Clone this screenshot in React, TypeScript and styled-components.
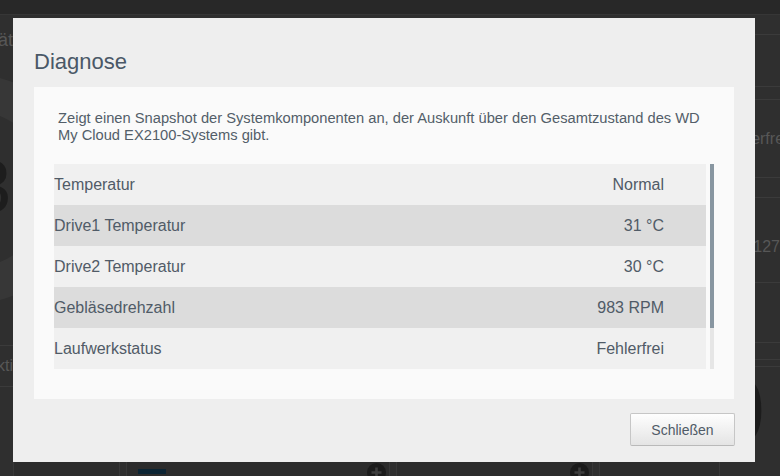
import React from 'react';
import styled, { createGlobalStyle } from 'styled-components';

const GlobalStyle = createGlobalStyle`
  html, body {
    margin: 0;
    padding: 0;
    background: #2f2f2f;
  }
  body {
    font-family: "Liberation Sans", Arial, sans-serif;
  }
  #root {
    width: 780px;
    height: 476px;
    overflow: hidden;
  }
`;

/* ---------- dimmed dashboard behind the dialog ---------- */

const Backdrop = styled.div`
  display: grid;
  grid-template-rows: 15px 1fr;
  width: 780px;
  height: 476px;
  background: #2f2f2f;
  overflow: hidden;
`;

const TopBar = styled.div`
  background: #282828;
  border-bottom: 1px solid #363636;
`;

const Board = styled.div`
  display: grid;
  grid-template-columns: 13px 1fr 60px;
  min-height: 0;
`;

const SideCol = styled.div`
  display: flex;
  flex-direction: column;
  min-width: 0;
  overflow: hidden;
`;

const SideRow = styled.div<{ $h?: number; $end?: boolean; $line?: boolean; $size?: number; $dark?: boolean }>`
  flex: ${({ $h }) => ($h ? `0 0 ${$h}px` : '1 1 auto')};
  box-sizing: border-box;
  display: flex;
  align-items: center;
  justify-content: ${({ $end }) => ($end ? 'flex-end' : 'flex-start')};
  white-space: nowrap;
  font-size: ${({ $size }) => $size ?? 16}px;
  color: ${({ $dark }) => ($dark ? '#1c1c1c' : '#575757')};
  border-bottom: ${({ $line }) => ($line ? '1px solid #3b3b3b' : 'none')};
`;

const BigNumber = styled(SideRow)`
  align-items: flex-start;
  padding-right: 15px;
  line-height: 88px;
`;

const IpRow = styled(SideRow)`
  padding-top: 14px;
`;

const MidCol = styled.div`
  display: flex;
  flex-direction: column;
  justify-content: flex-end;
  min-width: 0;
`;

const BottomRow = styled.div`
  display: flex;
  gap: 6px;
  height: 14px;
`;

const BottomTile = styled.div<{ $w?: number }>`
  flex: ${({ $w }) => ($w ? `0 0 ${$w}px` : '1 1 auto')};
  box-sizing: border-box;
  display: flex;
  justify-content: space-between;
  align-items: flex-start;
  padding: 1px 3px 0 11px;
  background: #2c2c2c;
  border-left: 1px solid #383838;
  border-right: 1px solid #383838;
`;

const BlueBar = styled.div`
  width: 28px;
  height: 5px;
  margin-top: 6px;
  background: #0c2433;
`;

const PlusIcon = () => (
  <svg width="19" height="19" viewBox="0 0 19 19">
    <circle cx="9.5" cy="9.5" r="9.5" fill="#1b1b1b" />
    <path d="M9.5 4.5v10M4.5 9.5h10" stroke="#3d3d3d" strokeWidth="2.6" />
  </svg>
);

const Donut = () => (
  <svg width="13" height="280" viewBox="0 0 13 280">
    <circle cx="-30" cy="124" r="97" fill="none" stroke="#373737" strokeWidth="36" />
    <text x="-30" y="147" fontSize="74" fill="#1d1d1d" textAnchor="middle" fontFamily="Liberation Sans, Arial, sans-serif">
      23
    </text>
  </svg>
);

/* ---------- dialog ---------- */

const Overlay = styled.div`
  position: fixed;
  inset: 0;
  display: flex;
  align-items: flex-start;
  padding: 18px 0 0 13px;
`;

const Dialog = styled.div`
  display: flex;
  flex-direction: column;
  box-sizing: border-box;
  width: 742px;
  height: 444px;
  padding: 0 21px;
  background: #eeeeee;
`;

const Title = styled.h2`
  margin: 0;
  padding: 31px 0 12px 0;
  font-size: 22px;
  line-height: 26px;
  font-weight: 400;
  color: #4a5867;
`;

const Panel = styled.div`
  box-sizing: border-box;
  height: 312px;
  padding: 23px 20px 30px 20px;
  background: #fafafa;
`;

const Description = styled.p`
  margin: 0 0 20px 4px;
  font-size: 14.7px;
  line-height: 17px;
  color: #535e69;
`;

const TableWrap = styled.div`
  display: flex;
  gap: 4px;
  height: 205px;
`;

const Table = styled.div`
  flex: 1;
  overflow: hidden;
`;

const Row = styled.div<{ $shade: boolean }>`
  display: flex;
  justify-content: space-between;
  height: 41px;
  padding: 0 42px 0 0;
  font-size: 16px;
  line-height: 41px;
  color: #505b67;
  background: ${({ $shade }) => ($shade ? '#dcdcdc' : '#f0f0f0')};
`;

const ScrollTrack = styled.div`
  width: 4px;
  background: #e6e6e6;
`;

const ScrollThumb = styled.div`
  background: #8896a1;
`;

const Footer = styled.div`
  display: flex;
  justify-content: flex-end;
  padding-top: 14px;
  margin-right: -1px;
`;

const Button = styled.button`
  width: 105px;
  height: 33px;
  border: 1px solid #c6c6c6;
  border-bottom-color: #b9b9b9;
  border-radius: 2px;
  background: linear-gradient(#fefefe, #e4e4e4);
  font-family: "Liberation Sans", Arial, sans-serif;
  font-size: 14px;
  color: #505b67;
  cursor: pointer;
`;

const rows = [
  { label: 'Temperatur', value: 'Normal' },
  { label: 'Drive1 Temperatur', value: '31 °C' },
  { label: 'Drive2 Temperatur', value: '30 °C' },
  { label: 'Gebläsedrehzahl', value: '983 RPM' },
  { label: 'Laufwerkstatus', value: 'Fehlerfrei' },
];

export default function App() {
  const visible = 205;
  const thumb = 164;

  return (
    <>
      <GlobalStyle />
      <Backdrop>
        <TopBar />
        <Board>
          <SideCol>
            <SideRow $h={50} $end $size={18}>
              Gerät
            </SideRow>
            <SideRow $h={281} $line>
              <Donut />
            </SideRow>
            <SideRow $h={41} $end $line>
              Akti
            </SideRow>
            <SideRow />
          </SideCol>

          <MidCol>
            <BottomRow>
              <BottomTile $w={107} />
              <BottomTile $w={264}>
                <BlueBar />
                <PlusIcon />
              </BottomTile>
              <BottomTile $w={197}>
                <span />
                <PlusIcon />
              </BottomTile>
              <BottomTile />
            </BottomRow>
          </MidCol>

          <SideCol>
            <SideRow $h={20} $line />
            <SideRow $h={52} $line />
            <SideRow $h={13} $line />
            <SideRow $h={78} $line>
              Fehlerfrei
            </SideRow>
            <SideRow $h={20} $line />
            <IpRow $h={85} $line $end>
              192.168.1.127
            </IpRow>
            <SideRow $h={60} $line />
            <SideRow $h={17} $line />
            <SideRow $h={7} $line />
            <BigNumber $end $dark $size={94}>
              0
            </BigNumber>
          </SideCol>
        </Board>
      </Backdrop>

      <Overlay>
        <Dialog role="dialog" aria-label="Diagnose">
          <Title>Diagnose</Title>
          <Panel>
            <Description>
              Zeigt einen Snapshot der Systemkomponenten an, der Auskunft über den Gesamtzustand des WD My Cloud
              EX2100-Systems gibt.
            </Description>
            <TableWrap>
              <Table>
                {rows.map((r, i) => (
                  <Row key={r.label} $shade={i % 2 === 1}>
                    <span>{r.label}</span>
                    <span>{r.value}</span>
                  </Row>
                ))}
              </Table>
              <ScrollTrack>
                <ScrollThumb style={{ height: `${(thumb / visible) * 100}%` }} />
              </ScrollTrack>
            </TableWrap>
          </Panel>
          <Footer>
            <Button type="button">Schließen</Button>
          </Footer>
        </Dialog>
      </Overlay>
    </>
  );
}
